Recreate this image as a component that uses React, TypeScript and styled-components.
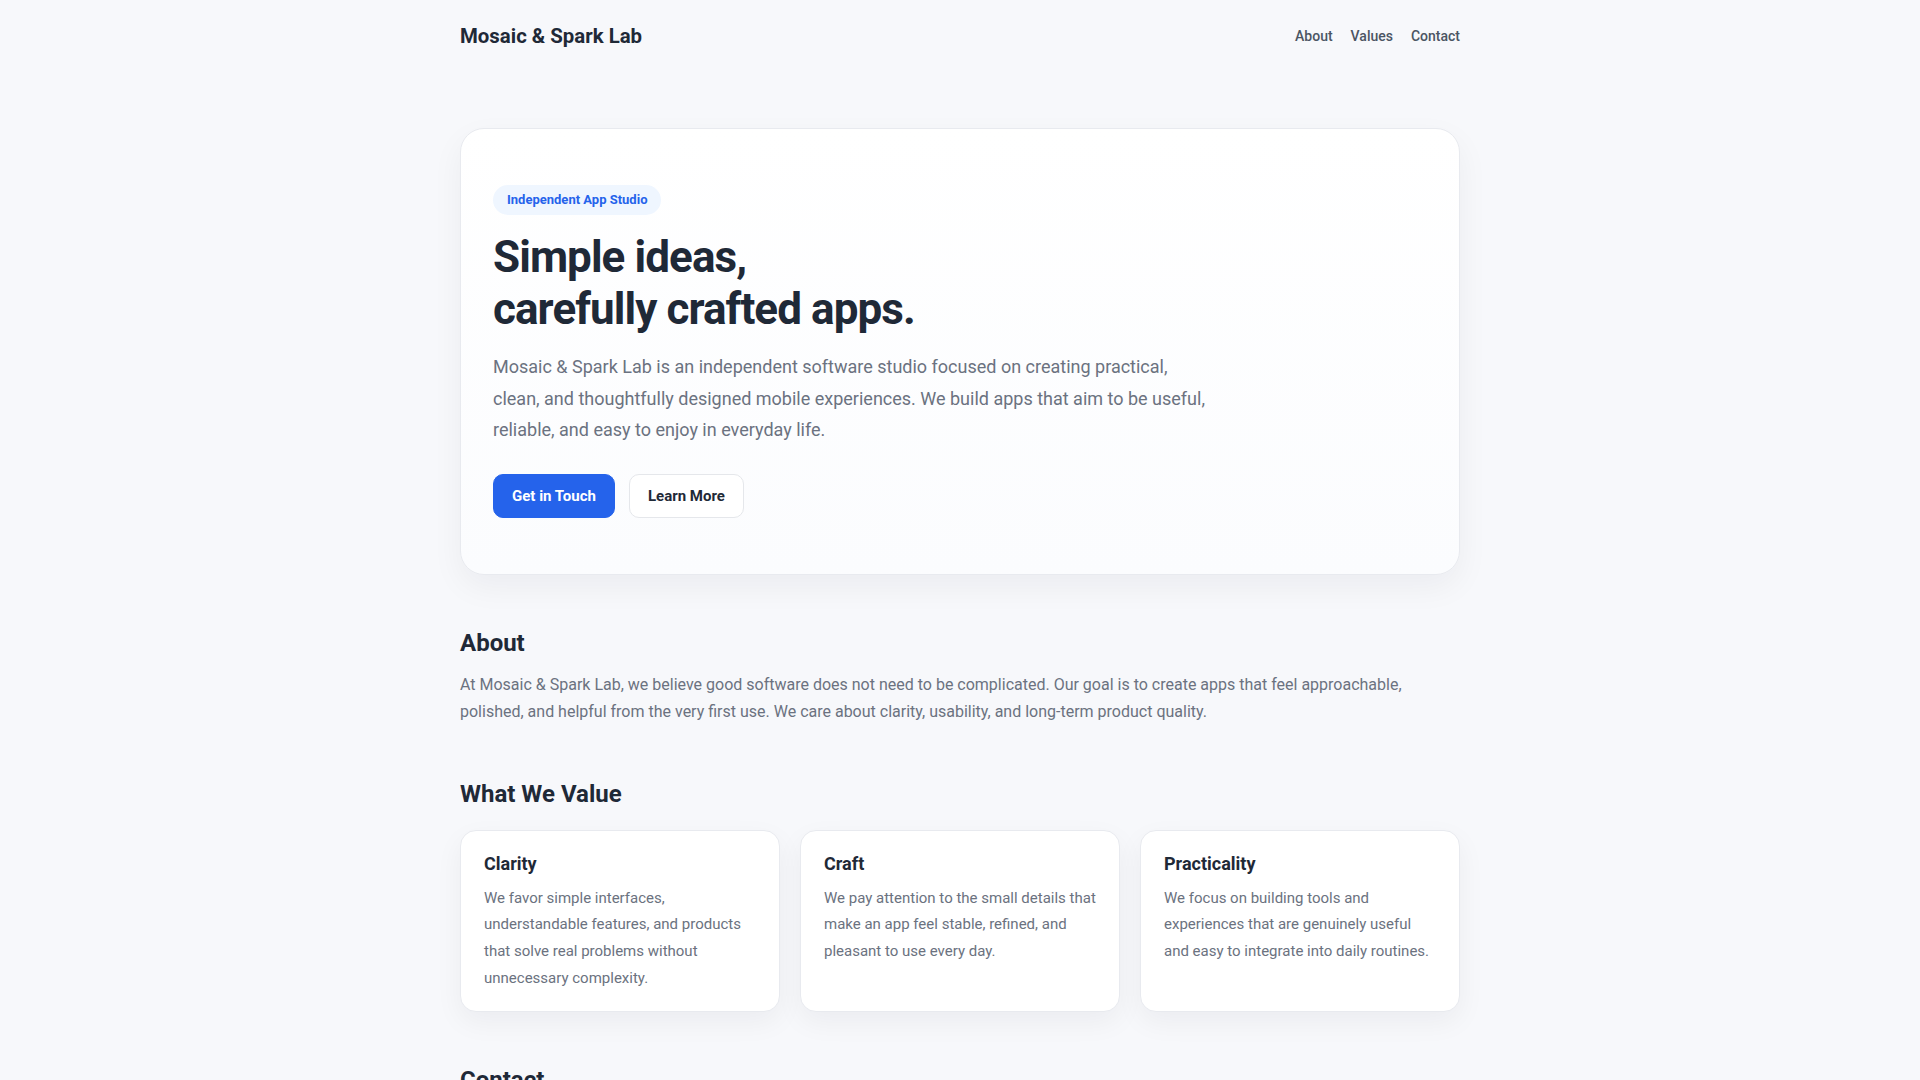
import React from 'react'
import styled, { createGlobalStyle } from 'styled-components'

const GlobalStyle = createGlobalStyle`
  * {
    box-sizing: border-box;
  }
  body {
    margin: 0;
    background: #f7f8fb;
    font-family: Roboto, "Noto Sans", Arial, sans-serif;
    color: #1f2937;
    -webkit-font-smoothing: antialiased;
  }
`

const Page = styled.div`
  max-width: 1000px;
  margin: 0 auto;
`

const Header = styled.header`
  display: flex;
  align-items: center;
  justify-content: space-between;
  padding: 24px 0;
`

const Brand = styled.div`
  font-size: 20.4px;
  line-height: 24px;
  font-weight: 700;
  color: #1f2937;
`

const Nav = styled.nav`
  display: flex;
  gap: 18px;
`

const NavLink = styled.a`
  font-size: 14px;
  font-weight: 500;
  color: #4b5563;
  text-decoration: none;
`

const Hero = styled.section`
  margin-top: 56px;
  padding: 56px 32px;
  background: linear-gradient(180deg, #ffffff 0%, #fbfcfe 100%);
  border: 1px solid #e8eaef;
  border-radius: 24px;
  box-shadow: 0 12px 32px rgba(15, 23, 42, 0.05);
`

const Badge = styled.span`
  display: inline-block;
  padding: 7px 14px;
  font-size: 13px;
  line-height: 16px;
  font-weight: 700;
  color: #2563eb;
  background: #eff6ff;
  border-radius: 999px;
`

const Title = styled.h1`
  margin: 16px 0 0;
  font-size: 44px;
  line-height: 52px;
  font-weight: 700;
  letter-spacing: -0.021em;
  color: #1f2937;
`

const Lead = styled.p`
  margin: 16px 0 0;
  max-width: 720px;
  font-size: 18px;
  line-height: 1.75;
  color: #6b7280;
`

const Actions = styled.div`
  display: flex;
  gap: 14px;
  margin-top: 28px;
`

const Button = styled.a<{ $primary?: boolean }>`
  display: inline-flex;
  align-items: center;
  height: 44px;
  padding: 0 18px;
  border-radius: 10px;
  font-size: 15px;
  font-weight: 700;
  text-decoration: none;
  border: 1px solid ${p => (p.$primary ? '#2563eb' : '#e5e7eb')};
  background: ${p => (p.$primary ? '#2563eb' : '#ffffff')};
  color: ${p => (p.$primary ? '#ffffff' : '#1f2937')};
`

const Section = styled.section`
  padding-top: 54px;
`

const SectionTitle = styled.h2`
  margin: 0 0 14px;
  font-size: 24px;
  line-height: 1.2;
  font-weight: 700;
  color: #1f2937;
`

const Body = styled.p`
  margin: 0;
  font-size: 16px;
  line-height: 1.7;
  color: #6b7280;
`

const Grid = styled.div`
  display: grid;
  grid-template-columns: repeat(3, 1fr);
  gap: 20px;
  margin-top: 22px;
`

const Card = styled.div`
  padding: 21px 23px 20px;
  background: #ffffff;
  border: 1px solid #e8eaef;
  border-radius: 16px;
  box-shadow: 0 10px 28px rgba(15, 23, 42, 0.05);
`

const CardTitle = styled.h3`
  margin: 0 0 9px;
  font-size: 18px;
  line-height: 1.3;
  font-weight: 700;
  color: #1f2937;
`

const CardText = styled.p`
  margin: 0;
  font-size: 15px;
  line-height: 1.77;
  color: #6b7280;
`

const values = [
  {
    title: 'Clarity',
    text: 'We favor simple interfaces, understandable features, and products that solve real problems without unnecessary complexity.'
  },
  {
    title: 'Craft',
    text: 'We pay attention to the small details that make an app feel stable, refined, and pleasant to use every day.'
  },
  {
    title: 'Practicality',
    text: 'We focus on building tools and experiences that are genuinely useful and easy to integrate into daily routines.'
  }
]

const App = () => {
  return (
    <>
      <GlobalStyle />
      <Page>
        <Header>
          <Brand>Mosaic &amp; Spark Lab</Brand>
          <Nav>
            <NavLink href='#about'>About</NavLink>
            <NavLink href='#values'>Values</NavLink>
            <NavLink href='#contact'>Contact</NavLink>
          </Nav>
        </Header>

        <Hero>
          <Badge>Independent App Studio</Badge>
          <Title>
            Simple ideas,
            <br />
            carefully crafted apps.
          </Title>
          <Lead>
            Mosaic &amp; Spark Lab is an independent software studio focused on creating practical,
            clean, and thoughtfully designed mobile experiences. We build apps that aim to be useful,
            reliable, and easy to enjoy in everyday life.
          </Lead>
          <Actions>
            <Button $primary href='#contact'>Get in Touch</Button>
            <Button href='#about'>Learn More</Button>
          </Actions>
        </Hero>

        <Section id='about'>
          <SectionTitle>About</SectionTitle>
          <Body>
            At Mosaic &amp; Spark Lab, we believe good software does not need to be complicated. Our goal is
            to create apps that feel approachable, polished, and helpful from the very first use. We care
            about clarity, usability, and long-term product quality.
          </Body>
        </Section>

        <Section id='values'>
          <SectionTitle>What We Value</SectionTitle>
          <Grid>
            {values.map(v => (
              <Card key={v.title}>
                <CardTitle>{v.title}</CardTitle>
                <CardText>{v.text}</CardText>
              </Card>
            ))}
          </Grid>
        </Section>

        <Section id='contact'>
          <SectionTitle>Contact</SectionTitle>
          <Body>
            Have a question or an idea you would like to share? We would love to hear from you.
          </Body>
        </Section>
      </Page>
    </>
  )
}

export default App
